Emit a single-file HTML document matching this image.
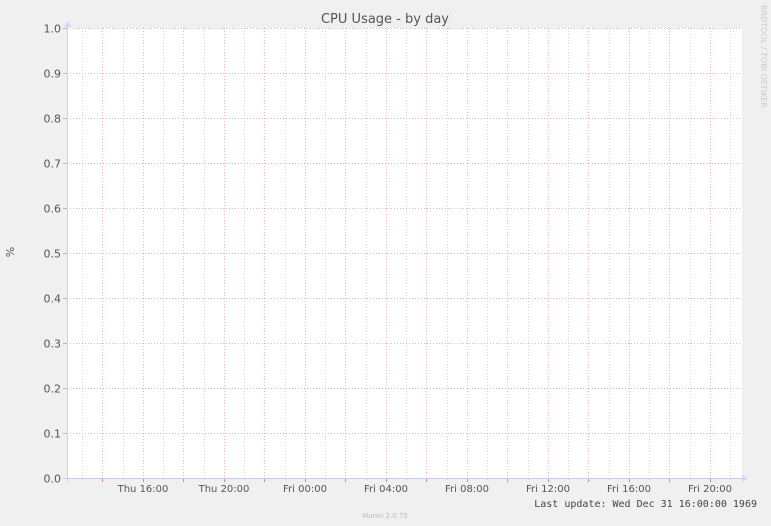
<!DOCTYPE html>
<html><head><meta charset="utf-8"><style>
html,body{margin:0;padding:0;background:#f0f0f0;}
svg{display:block;}
text{font-family:"DejaVu Sans","Liberation Sans",sans-serif;}
</style></head><body>
<svg width="771" height="526" xmlns="http://www.w3.org/2000/svg">
<rect width="771" height="526" fill="#f0f0f0"/>
<rect x="67" y="28" width="675" height="450" fill="#ffffff"/>
<g id="grid"></g>
<text x="385" y="23" font-size="13" fill="#555" text-anchor="middle">CPU Usage - by day</text>
<text transform="translate(14,252) rotate(-90)" font-size="11" fill="#555" text-anchor="middle">%</text>
<text transform="translate(761,5) rotate(90)" font-size="8" fill="#ccc">RRDTOOL / TOBI OETIKER</text>
<text x="757" y="507" font-size="10" fill="#444" text-anchor="end" style="font-family:'DejaVu Sans Mono','Liberation Mono',monospace">Last update: Wed Dec 31 16:00:00 1969</text>
<text x="385" y="518" font-size="7" fill="#bbb" text-anchor="middle">Munin 2.0.75</text>
</svg>
<script>
var g=document.getElementById('grid'),h='';
for(var k=0;k<33;k++){var x=Math.round(82+k*20.25)+0.5;var red=k%2==1;
h+='<line x1="'+x+'" y1="28" x2="'+x+'" y2="478" stroke="'+(red?'#f6b0b0':'#d4d4d4')+'" stroke-dasharray="1,2"/>';
if(red)h+='<line x1="'+x+'" y1="478" x2="'+x+'" y2="482" stroke="#f08080"/>';
else h+='<line x1="'+x+'" y1="478" x2="'+x+'" y2="480" stroke="#ccc"/>';}
for(var i=0;i<=10;i++){var y=478-i*45+0.5;
h+='<line x1="67" y1="'+y+'" x2="742" y2="'+y+'" stroke="#d8b8b8" stroke-dasharray="1,2"/>';
h+='<line x1="63" y1="'+y+'" x2="67" y2="'+y+'" stroke="#bbb"/>';
h+='<text x="61" y="'+(y+4)+'" font-size="11" fill="#555" text-anchor="end">'+(i/10).toFixed(1)+'</text>';}
h+='<line x1="67.5" y1="24" x2="67.5" y2="482" stroke="#d0d0f4"/>';
h+='<line x1="63" y1="478.5" x2="744" y2="478.5" stroke="#c8c8f0"/>';
h+='<polygon points="64,27 71,27 67.5,21" fill="#d0d8f8"/>';
h+='<polygon points="742,475 742,482 748,478.5" fill="#d0d8f8"/>';
var labs=['Thu 16:00','Thu 20:00','Fri 00:00','Fri 04:00','Fri 08:00','Fri 12:00','Fri 16:00','Fri 20:00'];
for(var j=0;j<8;j++){var x=143+j*81;h+='<text x="'+x+'" y="492" font-size="10" fill="#555" text-anchor="middle">'+labs[j]+'</text>';}
g.innerHTML=h;
</script>
</body></html>
